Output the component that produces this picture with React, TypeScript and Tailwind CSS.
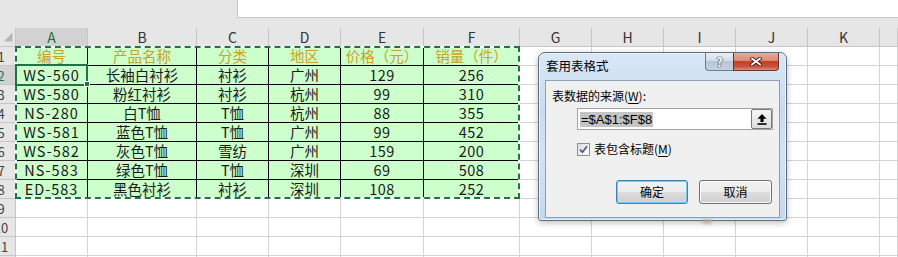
import React from "react";

const COL_LETTERS = ["A", "B", "C", "D", "E", "F", "G", "H", "I", "J", "K", ""];

const DATA: string[][] = [
  ["编号", "产品名称", "分类", "地区", "价格（元）", "销量（件）"],
  ["WS-560", "长袖白衬衫", "衬衫", "广州", "129", "256"],
  ["WS-580", "粉红衬衫", "衬衫", "杭州", "99", "310"],
  ["NS-280", "白T恤", "T恤", "杭州", "88", "355"],
  ["WS-581", "蓝色T恤", "T恤", "广州", "99", "452"],
  ["WS-582", "灰色T恤", "雪纺", "广州", "159", "200"],
  ["NS-583", "绿色T恤", "T恤", "深圳", "69", "508"],
  ["ED-583", "黑色衬衫", "衬衫", "深圳", "108", "252"],
];

const TOTAL_ROWS = 12;

function RowHeader({ n, active }: { n: number; active?: boolean }) {
  return (
    <div
      className={
        "overflow-hidden border-r border-b border-[#c6c6c6] flex items-center " +
        (active ? "bg-[#d2d2d2] text-[#217346]" : "bg-[#e6e6e6] text-[#444]")
      }
    >
      <div className="w-[28px] -ml-[13px] shrink-0 text-center text-[13px] leading-none">{n}</div>
    </div>
  );
}

function trackingFor(r: number, c: number) {
  if (r === 1) return "";
  if (c === 0) return " tracking-[1px]";
  if (c === 4 || c === 5) return " tracking-[0.4px]";
  return "";
}

function Sheet() {
  const cells: React.ReactNode[] = [];
  cells.push(
    <div key="corner" className="relative bg-[#e6e6e6] border-r border-b border-[#c6c6c6]">
      <svg className="absolute left-[4px] top-[4px]" width="9" height="10" viewBox="0 0 9 10">
        <path d="M8.5 0.5 V9.5 H0 Z" fill="#b5b5b5" />
      </svg>
    </div>
  );
  COL_LETTERS.forEach((l, i) => {
    cells.push(
      <div
        key={"h" + i}
        className={
          "flex items-center justify-center border-r border-b border-[#c6c6c6] text-[14px] leading-none " +
          (i === 0 ? "bg-[#d2d2d2] text-[#217346]" : "bg-[#e6e6e6] text-[#333]")
        }
      >
        {l}
      </div>
    );
  });
  for (let r = 1; r <= TOTAL_ROWS; r++) {
    cells.push(<RowHeader key={"r" + r} n={r} active={r === 2} />);
    for (let c = 0; c < COL_LETTERS.length; c++) {
      const inData = r <= 8 && c <= 5;
      const text = inData ? DATA[r - 1][c] : "";
      cells.push(
        <div
          key={r + "-" + c}
          className={
            "flex items-center justify-center border-r border-b whitespace-nowrap text-[14.5px] leading-none " +
            (inData
              ? "bg-[#ccffcc] border-black " + (r === 1 ? "text-[#c9a227]" : "text-[#1a1a1a]") + trackingFor(r, c)
              : "bg-white border-[#d4d4d4]")
          }
        >
          {text}
        </div>
      );
    }
  }
  return (
    <div className="grid grid-cols-[16px_72px_109px_72px_72px_83px_96px_72px_72px_72px_72px_72px_1fr] auto-rows-[19px]">
      {cells}
    </div>
  );
}

function Dialog() {
  return (
    <div className="absolute left-[538px] top-[52px] w-[249px] h-[169px] rounded-t-[7px] rounded-b-[3px] border border-[#5f6e7e] bg-[linear-gradient(to_bottom,#d9e7f6_0%,#c8dcf1_35%,#d3e3f4_60%,#c4d8ee_100%)] shadow-[inset_0_0_0_1px_rgba(255,255,255,0.6),0_2px_6px_rgba(0,0,0,0.25)] flex flex-col px-[6px]">
      <div className="flex h-[27px] shrink-0">
        <div className="self-center pl-[1px] text-[12.5px] leading-none text-black">套用表格式</div>
        <div className="ml-auto mr-[1px] flex h-[18px] self-start">
          <div className="w-[28px] h-[18px] flex items-center justify-center rounded-bl-[4px] border border-t-0 border-r-0 border-[#6b7c8e] bg-[linear-gradient(to_bottom,#e8eef5_0%,#d3dde8_45%,#b7c6d6_50%,#c3d1df_100%)] text-[13px] font-bold leading-none text-white [text-shadow:0_0_1px_#2d3a48,0_0_1px_#2d3a48,0_0_1px_#2d3a48]">
            ?
          </div>
          <div className="w-[46px] h-[18px] flex items-center justify-center rounded-br-[4px] border border-t-0 border-[#6a3328] bg-[linear-gradient(to_bottom,#e9ab9c_0%,#dc8a77_45%,#c24129_50%,#c7533c_80%,#dc8f7c_100%)]">
            <svg width="12" height="9" viewBox="0 0 12 9">
              <path d="M2 1.5 L10 7.5 M10 1.5 L2 7.5" stroke="#3b1d17" strokeWidth="3.6" strokeLinecap="square" />
              <path d="M2 1.5 L10 7.5 M10 1.5 L2 7.5" stroke="#ffffff" strokeWidth="1.8" strokeLinecap="square" />
            </svg>
          </div>
        </div>
      </div>
      <div className="h-[138px] shrink-0 border border-[#8da0b5] bg-[#f0f0f0] flex flex-col text-[12px] text-black">
        <div className="mt-[7px] ml-[6px] h-[16px] flex items-center leading-none">
          表数据的来源(<span className="underline underline-offset-2">W</span>):
        </div>
        <div className="mt-[4px] ml-[31px] w-[196px] h-[22px] border border-[#a3a3a3] bg-white flex items-center">
          <span className="ml-[2px] h-[15px] px-[1px] bg-[#c4c4c4] flex items-center text-[13px] leading-none font-['Liberation_Sans',sans-serif]">
            =$A$1:$F$8
          </span>
          <div className="ml-auto mr-0 w-[21px] h-[20px] rounded-[2px] border border-[#7a7a7a] bg-[linear-gradient(to_bottom,#f6f6f6,#dedede)] flex items-center justify-center">
            <svg width="10" height="11" viewBox="0 0 10 11">
              <path d="M5 0 L9.5 4.8 H6.5 V8 H3.5 V4.8 H0.5 Z" fill="#000" />
              <rect x="0.5" y="9.2" width="9" height="1.6" fill="#000" />
            </svg>
          </div>
        </div>
        <div className="mt-[11px] ml-[31px] h-[16px] flex items-center gap-[4px]">
          <div className="w-[13px] h-[13px] border border-[#8e8f8f] bg-[linear-gradient(to_bottom_right,#dcdcdc,#fbfbfb)] flex items-center justify-center">
            <svg width="9" height="9" viewBox="0 0 9 9">
              <path d="M1 4.6 L3.4 7.2 L8 1.2" stroke="#4a5d8c" strokeWidth="1.8" fill="none" />
            </svg>
          </div>
          <span className="leading-none">
            表包含标题(<span className="underline underline-offset-2">M</span>)
          </span>
        </div>
        <div className="mt-[23px] mr-[7px] flex justify-end gap-[11px]">
          <div className="w-[72px] h-[24px] rounded-[3px] border border-[#3c7fb1] shadow-[inset_0_0_0_1px_#74d0f5] bg-[linear-gradient(to_bottom,#f2f2f2_0%,#ebebeb_50%,#dddddd_51%,#cfcfcf_100%)] flex items-center justify-center leading-none">
            确定
          </div>
          <div className="w-[73px] h-[24px] rounded-[3px] border border-[#707070] shadow-[inset_0_0_0_1px_#fcfcfc] bg-[linear-gradient(to_bottom,#f2f2f2_0%,#ebebeb_50%,#dddddd_51%,#cfcfcf_100%)] flex items-center justify-center leading-none">
            取消
          </div>
        </div>
      </div>
    </div>
  );
}

export default function App() {
  return (
    <div className="relative w-[898px] h-[257px] overflow-hidden bg-white font-['Noto_Sans_CJK_SC','Noto_Sans',sans-serif]">
      <div className="flex h-[18px] bg-[#e6e6e6]">
        <div className="w-[237px]" />
        <div className="flex-1 bg-white border-l border-b border-[#c6c6c6]" />
      </div>
      <div className="h-[10px] bg-[#e6e6e6]" />
      <Sheet />

      <div className="absolute left-[15px] top-[46px] w-[505px] h-[153px] border-2 border-white pointer-events-none">
        <div className="absolute -inset-[2px] border-2 border-dashed border-[#217346]" />
      </div>
      <div className="absolute left-[15px] top-[64px] w-[73px] h-[22px] border-2 border-[#217346] pointer-events-none" />
      <div className="absolute left-[84px] top-[81px] w-[6px] h-[6px] bg-[#217346] border border-white" />

      <Dialog />
      <div className="absolute left-[702px] top-[219px] w-[10px] h-[5px] rounded-full bg-[#b7a89a] blur-[1.5px] opacity-70" />
    </div>
  );
}
